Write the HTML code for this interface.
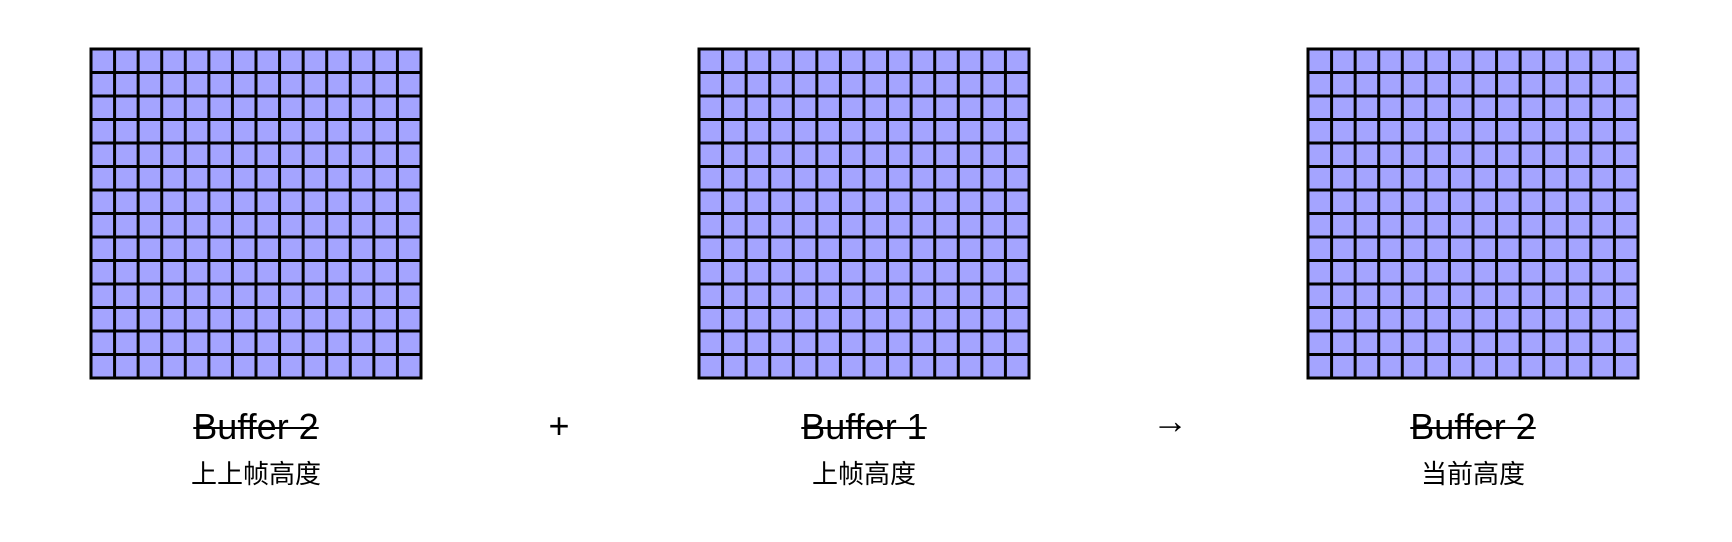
<!DOCTYPE html>
<html><head><meta charset="utf-8"><style>
html,body{margin:0;padding:0;background:#fff;width:1732px;height:542px;overflow:hidden}
.t{position:absolute;font-family:"Liberation Sans","Noto Sans CJK SC",sans-serif;color:#000;text-align:center;white-space:nowrap}
.b{font-size:36px;text-decoration:line-through;text-decoration-thickness:2px;width:300px;top:405px;line-height:44px}
.c{font-size:26px;width:300px;top:456px;line-height:36px}
</style></head><body>
<svg width="1732" height="542" style="position:absolute;left:0;top:0">
<g id="grids"></g>
</svg>
<script>
var s=document.querySelector('#grids'),ns='http://www.w3.org/2000/svg',xs=[91,699,1308];
xs.forEach(function(x0){var y0=49,W=330,H=329;
var r=document.createElementNS(ns,'rect');r.setAttribute('x',x0);r.setAttribute('y',y0);r.setAttribute('width',W);r.setAttribute('height',H);r.setAttribute('fill','#a4a4ff');r.setAttribute('stroke','#000');r.setAttribute('stroke-width','3');s.appendChild(r);
for(var i=1;i<14;i++){var l=document.createElementNS(ns,'line');var x=x0+W*i/14;l.setAttribute('x1',x);l.setAttribute('x2',x);l.setAttribute('y1',y0);l.setAttribute('y2',y0+H);l.setAttribute('stroke','#000');l.setAttribute('stroke-width','3');s.appendChild(l);
var m=document.createElementNS(ns,'line');var y=y0+H*i/14;m.setAttribute('y1',y);m.setAttribute('y2',y);m.setAttribute('x1',x0);m.setAttribute('x2',x0+W);m.setAttribute('stroke','#000');m.setAttribute('stroke-width','3');s.appendChild(m);}
});
</script>
<div class="t b" style="left:106px">Buffer 2</div>
<div class="t c" style="left:106px">上上帧高度</div>
<div class="t b" style="left:714px">Buffer 1</div>
<div class="t c" style="left:714px">上帧高度</div>
<div class="t b" style="left:1323px">Buffer 2</div>
<div class="t c" style="left:1323px">当前高度</div>
<div class="t" style="left:539px;top:404px;width:40px;font-size:36px;line-height:44px">+</div>
<div class="t" style="left:1140px;top:399px;width:60px;font-size:36px;line-height:44px">→</div>
</body></html>
